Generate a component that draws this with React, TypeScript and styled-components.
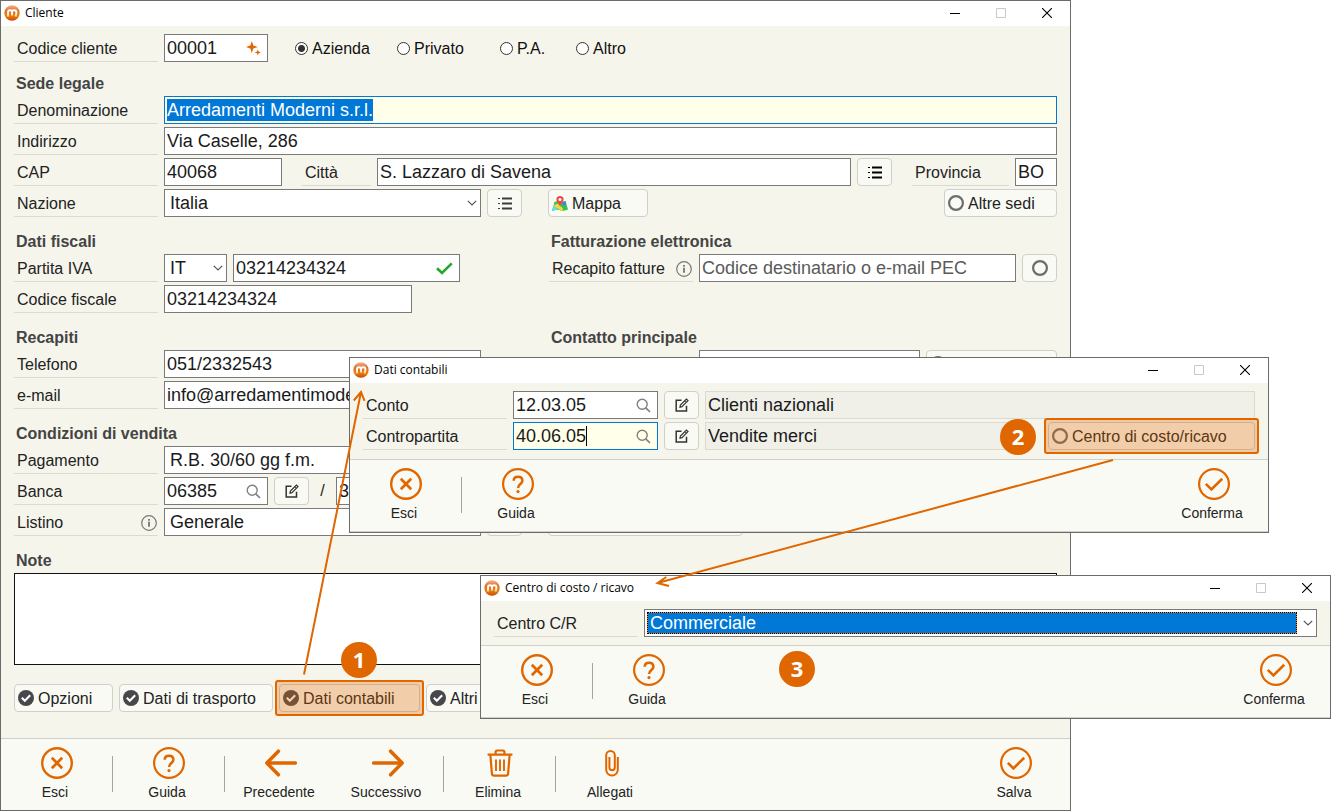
import React, { useEffect, useRef } from "react";
import styled, { createGlobalStyle, css } from "styled-components";

const color = {
  accent: "#e06600",
  text: "#222222",
  heading: "#444444",
  panel: "#f5f5ec",
  surface: "#f9faf4",
  line: "#cfcfcb",
  border: "#7a7a7a",
  frame: "#6b6b6b",
  focus: "#0078d7",
  focusFill: "#ffffea",
};

const GlobalStyle = createGlobalStyle`
  *, *::before, *::after { box-sizing: border-box; }
  body {
    margin: 0;
    background: #ffffff;
    color: ${color.text};
    font-family: "Liberation Sans", Arial, sans-serif;
    font-size: 16px;
  }
  button, input, select, textarea { font: inherit; color: inherit; margin: 0; }
  h1, h2, h3 { margin: 0; }
`;

/* ---------- layout ---------- */

const Desktop = styled.main`
  position: relative;
  min-width: 1100px;
  min-height: 100vh;
  overflow: hidden;
`;

const Window = styled.section`
  display: flex;
  flex-direction: column;
  background: ${color.panel};
  border: 1px solid ${color.frame};
`;

const MainWindow = styled(Window)`
  margin-right: 260px;
`;

const Dialog = styled(Window)<{ $left: number; $right: number; $top: number }>`
  position: absolute;
  left: ${(p) => p.$left}px;
  right: ${(p) => p.$right}px;
  top: ${(p) => p.$top}px;
`;

const TitleBar = styled.header`
  display: flex;
  align-items: center;
  height: 25px;
  padding: 0 0 1px 3px;
  background: #ffffff;
`;

const Title = styled.h1`
  flex: 1;
  padding-left: 5px;
  color: #000000;
  font-family: "Open Sans", "Segoe UI", sans-serif;
  font-size: 12px;
  font-weight: 400;
  line-height: 18px;
`;

const WindowButton = styled.button`
  display: flex;
  align-items: center;
  justify-content: center;
  width: 46px;
  height: 24px;
  padding: 0;
  border: 0;
  background: transparent;
`;

const Form = styled.form<{ $bottom: number }>`
  padding: 8px 13px ${(p) => p.$bottom}px;
`;

const Rows = styled.div`
  display: flex;
  flex-direction: column;
  gap: 3px;
`;

const Row = styled.div`
  display: flex;
  gap: 6px;
  height: 28px;
`;

const Columns = styled.div`
  display: grid;
  grid-template-columns: minmax(0, 1fr) 508px;
`;

const Heading = styled.h2<{ $first?: boolean }>`
  display: block;
  padding: ${(p) => (p.$first ? 12 : 15)}px 0 2px 2px;
  color: ${color.heading};
  font-size: 16px;
  font-weight: 700;
  line-height: 20px;
`;

const Spacer = styled.span<{ $width?: number }>`
  flex: ${(p) => (p.$width ? `0 0 ${p.$width}px` : "1")};
`;

/* ---------- controls ---------- */

const Label = styled.label<{ $width?: number }>`
  display: flex;
  align-items: center;
  justify-content: space-between;
  flex: 0 0 ${(p) => p.$width ?? 144}px;
  padding: 2px 1px 0 3px;
  border-bottom: 1px solid #dadad3;
  white-space: nowrap;
`;

const Box = styled.span<{ $width?: number; $active?: boolean; $muted?: boolean }>`
  display: flex;
  align-items: center;
  flex: ${(p) => (p.$width ? `0 0 ${p.$width}px` : "1")};
  min-width: 0;
  padding: 0 6px 0 2px;
  border: 1px solid ${(p) => (p.$active ? color.focus : p.$muted ? "#dadad3" : color.border)};
  background: ${(p) => (p.$active ? color.focusFill : p.$muted ? "#f0f0e8" : "#ffffff")};
`;

const Input = styled.input<{ $hug?: boolean }>`
  flex: 1;
  width: 100%;
  min-width: 0;
  height: 22px;
  padding: 0;
  border: 0;
  outline: 0;
  background: transparent;
  color: #1a1a1a;
  font-size: 18px;
  line-height: 22px;
  &::placeholder { color: #5a5a5a; opacity: 1; }
  &::selection { background: ${color.focus}; color: #ffffff; }
  ${(p) => p.$hug && css`
    flex: 0 0 auto;
    width: auto;
    field-sizing: content;
  `}
`;

const Caret = styled.span`
  width: 1px;
  height: 20px;
  margin-right: auto;
  background: #000000;
`;

const SelectBox = styled.span<{ $width?: number }>`
  display: flex;
  align-items: center;
  flex: ${(p) => (p.$width ? `0 0 ${p.$width}px` : "1")};
  min-width: 0;
  padding: 2px 3px 2px 2px;
  border: 1px solid ${color.border};
  background: #ffffff;
`;

const Select = styled.select<{ $active?: boolean }>`
  appearance: none;
  flex: 1;
  min-width: 0;
  height: 22px;
  padding: 0 2px;
  border: 1px solid transparent;
  border-radius: 0;
  outline: 0;
  background: transparent;
  color: #1a1a1a;
  font-size: 18px;
  line-height: 20px;
  ${(p) => p.$active && css`
    color: #ffffff;
    border: 1px dotted #000000;
    background: linear-gradient(${color.focus}, ${color.focus}) padding-box, #ff8728 border-box;
  `}
`;

const Button = styled.button<{ $width?: number }>`
  display: flex;
  align-items: center;
  justify-content: ${(p) => (p.$width ? "flex-start" : "center")};
  gap: 4px;
  flex: 0 0 ${(p) => p.$width ?? 35}px;
  height: 28px;
  padding: 0 ${(p) => (p.$width ? 3 : 0)}px;
  border: 1px solid ${color.line};
  border-radius: 4px;
  background: ${color.surface};
  white-space: nowrap;
`;

const ButtonText = styled.span`
  padding-top: 2px;
  line-height: 20px;
`;

const Radios = styled.div`
  display: flex;
  margin-left: 21px;
`;

const RadioLabel = styled.label<{ $width: number }>`
  display: flex;
  align-items: center;
  gap: 4px;
  width: ${(p) => p.$width}px;
  color: #111111;
`;

const Radio = styled.input`
  appearance: none;
  width: 13px;
  height: 13px;
  border: 1px solid #333333;
  border-radius: 50%;
  background: #ffffff;
  &:checked { background: radial-gradient(circle, #333333 3px, #ffffff 4px); }
`;

const Slash = styled.span`
  width: 15px;
  line-height: 28px;
  text-align: center;
`;

const Notes = styled.textarea`
  display: block;
  width: 100%;
  height: 92px;
  padding: 2px;
  border: 1px solid #111111;
  border-radius: 0;
  outline: 0;
  resize: none;
  background: #ffffff;
`;

const Tabs = styled.div`
  display: flex;
  gap: 6px;
  margin-top: 19px;
`;

/* ---------- tool bar ---------- */

const ToolBar = styled.footer<{ $edge?: boolean }>`
  display: flex;
  align-items: flex-start;
  height: ${(p) => (p.$edge ? 73 : 72)}px;
  border-top: 1px solid ${color.line};
  border-bottom: ${(p) => (p.$edge ? `1px solid ${color.line}` : "0")};
  background: ${color.surface};
`;

const ToolGroup = styled.div`
  display: flex;
  gap: 4px;
  padding: 8px 4px 0;
`;

const EndGroup = styled(ToolGroup)`
  margin-left: auto;
  padding-right: 3px;
`;

const Divider = styled.span`
  width: 1px;
  height: 36px;
  margin-top: 17px;
  background: #a3a3a0;
`;

const Tool = styled.button`
  display: flex;
  flex-direction: column;
  align-items: center;
  gap: 4px;
  width: 103px;
  padding: 0;
  border: 0;
  background: transparent;
  font-size: 14px;
  line-height: 18px;
`;

const ToolName = styled.span`
  padding-right: 3px;
`;

/* ---------- annotations ---------- */

const Highlight = styled.span<{ $width: number }>`
  position: relative;
  display: flex;
  flex: 0 0 ${(p) => p.$width}px;
  &::after {
    content: "";
    position: absolute;
    inset: -4px;
    border: 2px solid ${color.accent};
    border-radius: 3px;
    background: rgba(224, 102, 0, 0.3);
    pointer-events: none;
  }
`;

const Badge = styled.span<{ $left: number; $top: number }>`
  position: absolute;
  left: ${(p) => p.$left}px;
  top: ${(p) => p.$top}px;
  width: 36px;
  height: 36px;
  border-radius: 50%;
  background: ${color.accent};
  color: #ffffff;
  font-family: "Open Sans", "Segoe UI", sans-serif;
  font-size: 22px;
  font-weight: 700;
  line-height: 34px;
  text-align: center;
`;

const Arrows = styled.svg`
  position: absolute;
  left: 0;
  top: 0;
  pointer-events: none;
`;

/* ---------- icons ---------- */

const Logo = () => (
  <svg width="16" height="16" viewBox="0 0 16 16" aria-hidden="true">
    <defs>
      <linearGradient id="ball" x1="0" y1="0" x2="0" y2="1">
        <stop offset="0" stopColor="#f2b48c" />
        <stop offset="0.35" stopColor="#e0702c" />
        <stop offset="0.7" stopColor="#ea7d10" />
        <stop offset="1" stopColor="#cc4408" />
      </linearGradient>
      <linearGradient id="letter" x1="0" y1="0" x2="0" y2="1">
        <stop offset="0" stopColor="#ffffff" />
        <stop offset="0.6" stopColor="#fff0dc" />
        <stop offset="1" stopColor="#ffd060" />
      </linearGradient>
    </defs>
    <circle cx="8" cy="8" r="7.7" fill="url(#ball)" />
    <path
      d="M4 11.600V7.300c0-2.800 4-2.800 4 0V10.600M8 7.300c0-2.800 4.400-2.800 4.400 0 0 1.800-.3 2.900-1 4.100"
      fill="none" stroke="url(#letter)" strokeWidth="2"
    />
  </svg>
);

const MinimizeIcon = () => (
  <svg width="10" height="10" aria-hidden="true"><path d="M0 5.5H10" stroke="#000" /></svg>
);
const MaximizeIcon = () => (
  <svg width="10" height="10" aria-hidden="true"><path d="M.5.5h9v9h-9z" fill="none" stroke="#c8c8c8" /></svg>
);
const CloseIcon = () => (
  <svg width="10" height="10" aria-hidden="true"><path d="M0 0l10 10M10 0L0 10" stroke="#000" strokeWidth="1.1" /></svg>
);

const Chevron = () => (
  <svg width="10" height="6" viewBox="0 0 10 6" aria-hidden="true">
    <path d="M.8.8L5 5 9.2.8" fill="none" stroke="#555" strokeWidth="1.2" />
  </svg>
);

const SparkIcon = () => (
  <svg width="15" height="15" viewBox="0 0 15 15" fill={color.accent} aria-hidden="true">
    <path d="M5.800 0L7.300 4.500 11.800 6 7.300 7.500 5.800 12 4.300 7.500 0 6 4.300 4.500Z" />
    <path d="M11.800 8.400L12.600 10.600 15 11.400 12.600 12.200 11.800 14.600 11 12.200 8.600 11.400 11 10.600Z" />
  </svg>
);

const SearchIcon = () => (
  <svg width="15" height="15" viewBox="0 0 15 15" fill="none" stroke="#808080" strokeWidth="1.4" aria-hidden="true">
    <circle cx="6.2" cy="6.2" r="5" />
    <path d="M9.8 9.8L14 14" strokeWidth="1.7" />
  </svg>
);

const ValidIcon = () => (
  <svg width="17" height="13" viewBox="0 0 17 13" aria-hidden="true">
    <path d="M1 6.200L6 11 15.800 1.400" fill="none" stroke="#27a52e" strokeWidth="2.6" />
  </svg>
);

const InfoIcon = () => (
  <svg width="16" height="16" viewBox="0 0 16 16" aria-hidden="true">
    <circle cx="8" cy="8" r="7.3" fill="none" stroke="#777" strokeWidth="1.2" />
    <path d="M8 6.8v5M8 4v1.7" stroke="#6c6c6c" strokeWidth="1.7" />
  </svg>
);

const ListIcon = ({ tint }: { tint: string }) => (
  <svg width="14" height="13" viewBox="0 0 14 13" fill={tint} aria-hidden="true">
    <path d="M0 1h2v1H0zM0 6h2v1H0zM0 11h2v1H0zM4 .5h10v2H4zM4 5.5h10v2H4zM4 10.5h10v2H4z" />
  </svg>
);

const EditIcon = () => (
  <svg width="14" height="14" viewBox="0 0 14 14" fill="none" stroke="#333" strokeWidth="1.5" aria-hidden="true">
    <path d="M6.5 2.2H1.2V13H11.5V7.8" />
    <path d="M5 9.2L5.4 7 11.4 1 13 2.6 7 8.7Z" strokeWidth="1.2" />
    <path d="M9.8 2.6L11.5 4.3" strokeWidth="1" />
  </svg>
);

const RingIcon = () => (
  <svg width="16" height="16" viewBox="0 0 16 16" aria-hidden="true">
    <circle cx="8" cy="8" r="6.900" fill="none" stroke="#6c6c6e" strokeWidth="2.200" />
  </svg>
);

const DoneIcon = () => (
  <svg width="16" height="16" viewBox="0 0 16 16" aria-hidden="true">
    <circle cx="8" cy="8" r="8" fill="#48484c" />
    <path d="M3.8 7.8L6.8 10.7 12.2 5.2" fill="none" stroke="#fff" strokeWidth="2.1" />
  </svg>
);

const MapIcon = () => (
  <svg width="16" height="15" viewBox="0 0 16 15" aria-hidden="true">
    <path d="M2.5 6L5.5 5 10.5 6 13.5 5 16 13.5 11 15 5 13.5 0 15Z" fill="#37c24b" />
    <path d="M0 15L1.2 10 5.5 9 5 13.5Z" fill="#5fdcf0" />
    <path d="M1.5 9.5L5.4 7.5 10.6 12 11 15 8.6 14.4Z" fill="#f6d43c" />
    <path d="M10.6 6L13.5 5 14.3 8 10.8 10.5Z" fill="#3f83e8" />
    <path d="M8 0a3.6 3.6 0 013.6 3.6C11.6 6 8.8 7.4 8 10 7.2 7.4 4.4 6 4.4 3.6A3.6 3.6 0 018 0Z" fill="#f0473e" />
    <circle cx="8" cy="3.6" r="1.5" fill="#fff" />
  </svg>
);

const toolShapes = {
  close: <><circle cx="16" cy="16" r="14.8" strokeWidth="2.4" /><path d="M10.8 10.8l10.4 10.4M21.2 10.8L10.8 21.2" strokeWidth="2.7" /></>,
  help: (
    <>
      <circle cx="16" cy="16" r="14.9" strokeWidth="2.2" />
      <path d="M11.7 12.8c0-2.5 1.8-4 4.3-4s4.4 1.5 4.4 3.9c0 3.3-4.3 3.5-4.3 7.3" strokeWidth="2.5" />
      <circle cx="16" cy="23.6" r="1.6" fill={color.accent} stroke="none" />
    </>
  ),
  back: <path d="M1.8 16H30.3M13.4 4.2L1.8 16 13.4 27.8" strokeWidth="3.5" strokeLinecap="round" strokeLinejoin="round" />,
  next: <path d="M1.7 16H30.2M18.6 4.2L30.2 16 18.6 27.8" strokeWidth="3.5" strokeLinecap="round" strokeLinejoin="round" />,
  remove: (
    <>
      <path d="M3.6 7.6H28.4M11.6 7V5q0-1.5 1.5-1.5h5.8q1.5 0 1.5 1.5v2" strokeWidth="2.2" />
      <path d="M6.4 8.2L7.9 26.6q.2 2 2.2 2H21.9q2 0 2.2-2L25.6 8.2" strokeWidth="2.2" />
      <path d="M12 12.5V24M16 12.5V24M20 12.5V24" strokeWidth="1.9" />
    </>
  ),
  attach: <path d="M21.800 10V22.800a5.800 5.800 0 01-11.600 0V8.200a4.300 4.300 0 018.600 0V20.600a2.700 2.700 0 01-5.400 0V10" strokeWidth="2" />,
  confirm: <><circle cx="16" cy="16" r="14.9" strokeWidth="2.2" /><path d="M7.8 15.8L13.4 21.4 24.2 10.8" strokeWidth="2.6" /></>,
};

type ToolItem = { name: string; icon: keyof typeof toolShapes };

const ToolButton = ({ name, icon }: ToolItem) => (
  <Tool type="button">
    <svg width="32" height="32" viewBox="0 0 32 32" fill="none" stroke={color.accent} aria-hidden="true">
      {toolShapes[icon]}
    </svg>
    <ToolName>{name}</ToolName>
  </Tool>
);

/* ---------- shared parts ---------- */

const Caption = ({ children }: { children: string }) => (
  <TitleBar>
    <Logo />
    <Title>{children}</Title>
    <WindowButton type="button" aria-label="Riduci a icona"><MinimizeIcon /></WindowButton>
    <WindowButton type="button" aria-label="Ingrandisci" disabled><MaximizeIcon /></WindowButton>
    <WindowButton type="button" aria-label="Chiudi"><CloseIcon /></WindowButton>
  </TitleBar>
);

const Tools = ({ groups, end, edge }: { groups: ToolItem[][]; end: ToolItem; edge?: boolean }) => (
  <ToolBar $edge={edge}>
    {groups.map((group, i) => (
      <React.Fragment key={group[0].name}>
        {i > 0 && <Divider />}
        <ToolGroup>
          {group.map((item) => <ToolButton key={item.name} {...item} />)}
        </ToolGroup>
      </React.Fragment>
    ))}
    <EndGroup><ToolButton {...end} /></EndGroup>
  </ToolBar>
);

type FieldProps = {
  id: string;
  value?: string;
  width?: number;
  placeholder?: string;
  name?: string;
  icon?: React.ReactNode;
};

const Field = ({ id, value = "", width, placeholder, name, icon }: FieldProps) => (
  <Box $width={width}>
    <Input id={id} defaultValue={value} placeholder={placeholder} aria-label={name} />
    {icon}
  </Box>
);

const Choice = ({ id, value, width, name, active }: { id: string; value: string; width?: number; name?: string; active?: boolean }) => (
  <SelectBox $width={width}>
    <Select id={id} aria-label={name} defaultValue={value} $active={active}>
      <option>{value}</option>
    </Select>
    <Spacer $width={6} />
    <Chevron />
  </SelectBox>
);

const exitItem: ToolItem = { name: "Esci", icon: "close" };
const helpItem: ToolItem = { name: "Guida", icon: "help" };

/* ---------- windows ---------- */

const CustomerWindow = () => {
  const nameRef = useRef<HTMLInputElement>(null);
  useEffect(() => {
    nameRef.current?.focus();
    nameRef.current?.select();
  }, []);

  return (
    <MainWindow>
      <Caption>Cliente</Caption>
      <Form $bottom={26}>
        <Row>
          <Label htmlFor="codice">Codice cliente</Label>
          <Field id="codice" value="00001" width={104} icon={<SparkIcon />} />
          <Radios role="radiogroup" aria-label="Tipo cliente">
            <RadioLabel $width={102}><Radio type="radio" name="tipo" defaultChecked /><ButtonText>Azienda</ButtonText></RadioLabel>
            <RadioLabel $width={103}><Radio type="radio" name="tipo" /><ButtonText>Privato</ButtonText></RadioLabel>
            <RadioLabel $width={76}><Radio type="radio" name="tipo" /><ButtonText>P.A.</ButtonText></RadioLabel>
            <RadioLabel $width={76}><Radio type="radio" name="tipo" /><ButtonText>Altro</ButtonText></RadioLabel>
          </Radios>
        </Row>

        <Heading $first>Sede legale</Heading>
        <Rows>
          <Row>
            <Label htmlFor="denominazione">Denominazione</Label>
            <Box $active>
              <Input id="denominazione" ref={nameRef} defaultValue="Arredamenti Moderni s.r.l." />
            </Box>
          </Row>
          <Row>
            <Label htmlFor="indirizzo">Indirizzo</Label>
            <Field id="indirizzo" value="Via Caselle, 286" />
          </Row>
          <Row>
            <Label htmlFor="cap">CAP</Label>
            <Field id="cap" value="40068" width={118} />
            <Spacer $width={8} />
            <Label htmlFor="citta" $width={69}>Città</Label>
            <Field id="citta" value="S. Lazzaro di Savena" />
            <Button type="button" aria-label="Elenco città"><ListIcon tint="#000000" /></Button>
            <Spacer $width={8} />
            <Label htmlFor="provincia" $width={97}>Provincia</Label>
            <Field id="provincia" value="BO" width={42} />
          </Row>
          <Row>
            <Label htmlFor="nazione">Nazione</Label>
            <Choice id="nazione" value="Italia" width={317} />
            <Button type="button" aria-label="Elenco nazioni"><ListIcon tint="#3c3c3c" /></Button>
            <Spacer $width={14} />
            <Button type="button" $width={100}><MapIcon /><ButtonText>Mappa</ButtonText></Button>
            <Spacer />
            <Button type="button" $width={113}><RingIcon /><ButtonText>Altre sedi</ButtonText></Button>
          </Row>
        </Rows>

        <Columns>
          <div>
            <Heading>Dati fiscali</Heading>
            <Rows>
              <Row>
                <Label htmlFor="piva">Partita IVA</Label>
                <Choice id="piva-paese" name="Paese" value="IT" width={63} />
                <Field id="piva" value="03214234324" width={227} icon={<ValidIcon />} />
              </Row>
              <Row>
                <Label htmlFor="cf">Codice fiscale</Label>
                <Field id="cf" value="03214234324" width={248} />
              </Row>
            </Rows>
          </div>
          <div>
            <Heading>Fatturazione elettronica</Heading>
            <Row>
              <Label htmlFor="recapito">Recapito fatture<InfoIcon /></Label>
              <Field id="recapito" placeholder="Codice destinatario o e-mail PEC" />
              <Button type="button" aria-label="Dettagli recapito"><RingIcon /></Button>
            </Row>
          </div>
          <div>
            <Heading>Recapiti</Heading>
            <Rows>
              <Row>
                <Label htmlFor="telefono">Telefono</Label>
                <Field id="telefono" value="051/2332543" width={317} />
              </Row>
              <Row>
                <Label htmlFor="email">e-mail</Label>
                <Field id="email" value="info@arredamentimoderni.it" width={317} />
              </Row>
            </Rows>
          </div>
          <div>
            <Heading>Contatto principale</Heading>
            <Row>
              <Spacer $width={144} />
              <Field id="contatto" name="Contatto" />
              <Button type="button" $width={131} aria-label="Altri contatti"><RingIcon /></Button>
            </Row>
          </div>
        </Columns>

        <Heading>Condizioni di vendita</Heading>
        <Rows>
          <Row>
            <Label htmlFor="pagamento">Pagamento</Label>
            <Choice id="pagamento" value="R.B. 30/60 gg f.m." width={317} />
          </Row>
          <Row>
            <Label htmlFor="banca">Banca</Label>
            <Field id="banca" value="06385" width={104} icon={<SearchIcon />} />
            <Button type="button" aria-label="Modifica banca"><EditIcon /></Button>
            <Slash>/</Slash>
            <Field id="cab" name="CAB" value="36850" width={145} />
          </Row>
          <Row>
            <Label htmlFor="listino">Listino<InfoIcon /></Label>
            <Choice id="listino" value="Generale" width={317} />
            <Button type="button" aria-label="Elenco listini"><ListIcon tint="#3c3c3c" /></Button>
            <Spacer $width={14} />
            <Button type="button" $width={195} aria-label="Condizioni"><RingIcon /></Button>
          </Row>
        </Rows>

        <Heading as="label" htmlFor="note">Note</Heading>
        <Notes id="note" />

        <Tabs>
          <Button type="button" $width={99}><DoneIcon /><ButtonText>Opzioni</ButtonText></Button>
          <Button type="button" $width={154}><DoneIcon /><ButtonText>Dati di trasporto</ButtonText></Button>
          <Highlight $width={141}>
            <Button type="button" $width={141}><DoneIcon /><ButtonText>Dati contabili</ButtonText></Button>
            <Badge $left={62} $top={-42}>1</Badge>
          </Highlight>
          <Button type="button" $width={110}><DoneIcon /><ButtonText>Altri dati</ButtonText></Button>
        </Tabs>
      </Form>
      <Tools
        groups={[
          [exitItem],
          [helpItem],
          [{ name: "Precedente", icon: "back" }, { name: "Successivo", icon: "next" }],
          [{ name: "Elimina", icon: "remove" }],
          [{ name: "Allegati", icon: "attach" }],
        ]}
        end={{ name: "Salva", icon: "confirm" }}
      />
    </MainWindow>
  );
};

const AccountingDialog = () => (
  <Dialog $left={349} $right={62} $top={357}>
    <Caption>Dati contabili</Caption>
    <Form $bottom={9}>
      <Rows>
        <Row>
          <Label htmlFor="conto">Conto</Label>
          <Field id="conto" value="12.03.05" width={145} icon={<SearchIcon />} />
          <Button type="button" aria-label="Modifica conto"><EditIcon /></Button>
          <Box $muted><Input readOnly aria-label="Descrizione conto" value="Clienti nazionali" /></Box>
        </Row>
        <Row>
          <Label htmlFor="contropartita">Contropartita</Label>
          <Box $width={145} $active>
            <Input id="contropartita" $hug defaultValue="40.06.05" />
            <Caret />
            <SearchIcon />
          </Box>
          <Button type="button" aria-label="Modifica contropartita"><EditIcon /></Button>
          <Box $muted><Input readOnly aria-label="Descrizione contropartita" value="Vendite merci" /></Box>
          <Spacer $width={14} />
          <Highlight $width={207}>
            <Button type="button" $width={207}><RingIcon /><ButtonText>Centro di costo/ricavo</ButtonText></Button>
            <Badge $left={-48} $top={-3}>2</Badge>
          </Highlight>
        </Row>
      </Rows>
    </Form>
    <Tools groups={[[exitItem], [helpItem]]} end={{ name: "Conferma", icon: "confirm" }} edge />
  </Dialog>
);

const CostCenterDialog = () => (
  <Dialog $left={480} $right={0} $top={575}>
    <Caption>Centro di costo / ricavo</Caption>
    <Form $bottom={8}>
      <Row>
        <Label htmlFor="centro">Centro C/R</Label>
        <Choice id="centro" value="Commerciale" active />
      </Row>
    </Form>
    <Tools groups={[[exitItem], [helpItem]]} end={{ name: "Conferma", icon: "confirm" }} edge />
    <Badge $left={298} $top={75}>3</Badge>
  </Dialog>
);

export default function App() {
  return (
    <>
      <GlobalStyle />
      <Desktop>
        <CustomerWindow />
        <AccountingDialog />
        <CostCenterDialog />
        <Arrows width="1120" height="680" fill="none" stroke={color.accent} strokeWidth="2" aria-hidden="true">
          <path d="M304 674.500L361 392M353.800 400.500L361 392L364.500 400.800" />
          <path d="M1113 460L657.500 583M669 586L657.500 583L666.300 577" />
        </Arrows>
      </Desktop>
    </>
  );
}
